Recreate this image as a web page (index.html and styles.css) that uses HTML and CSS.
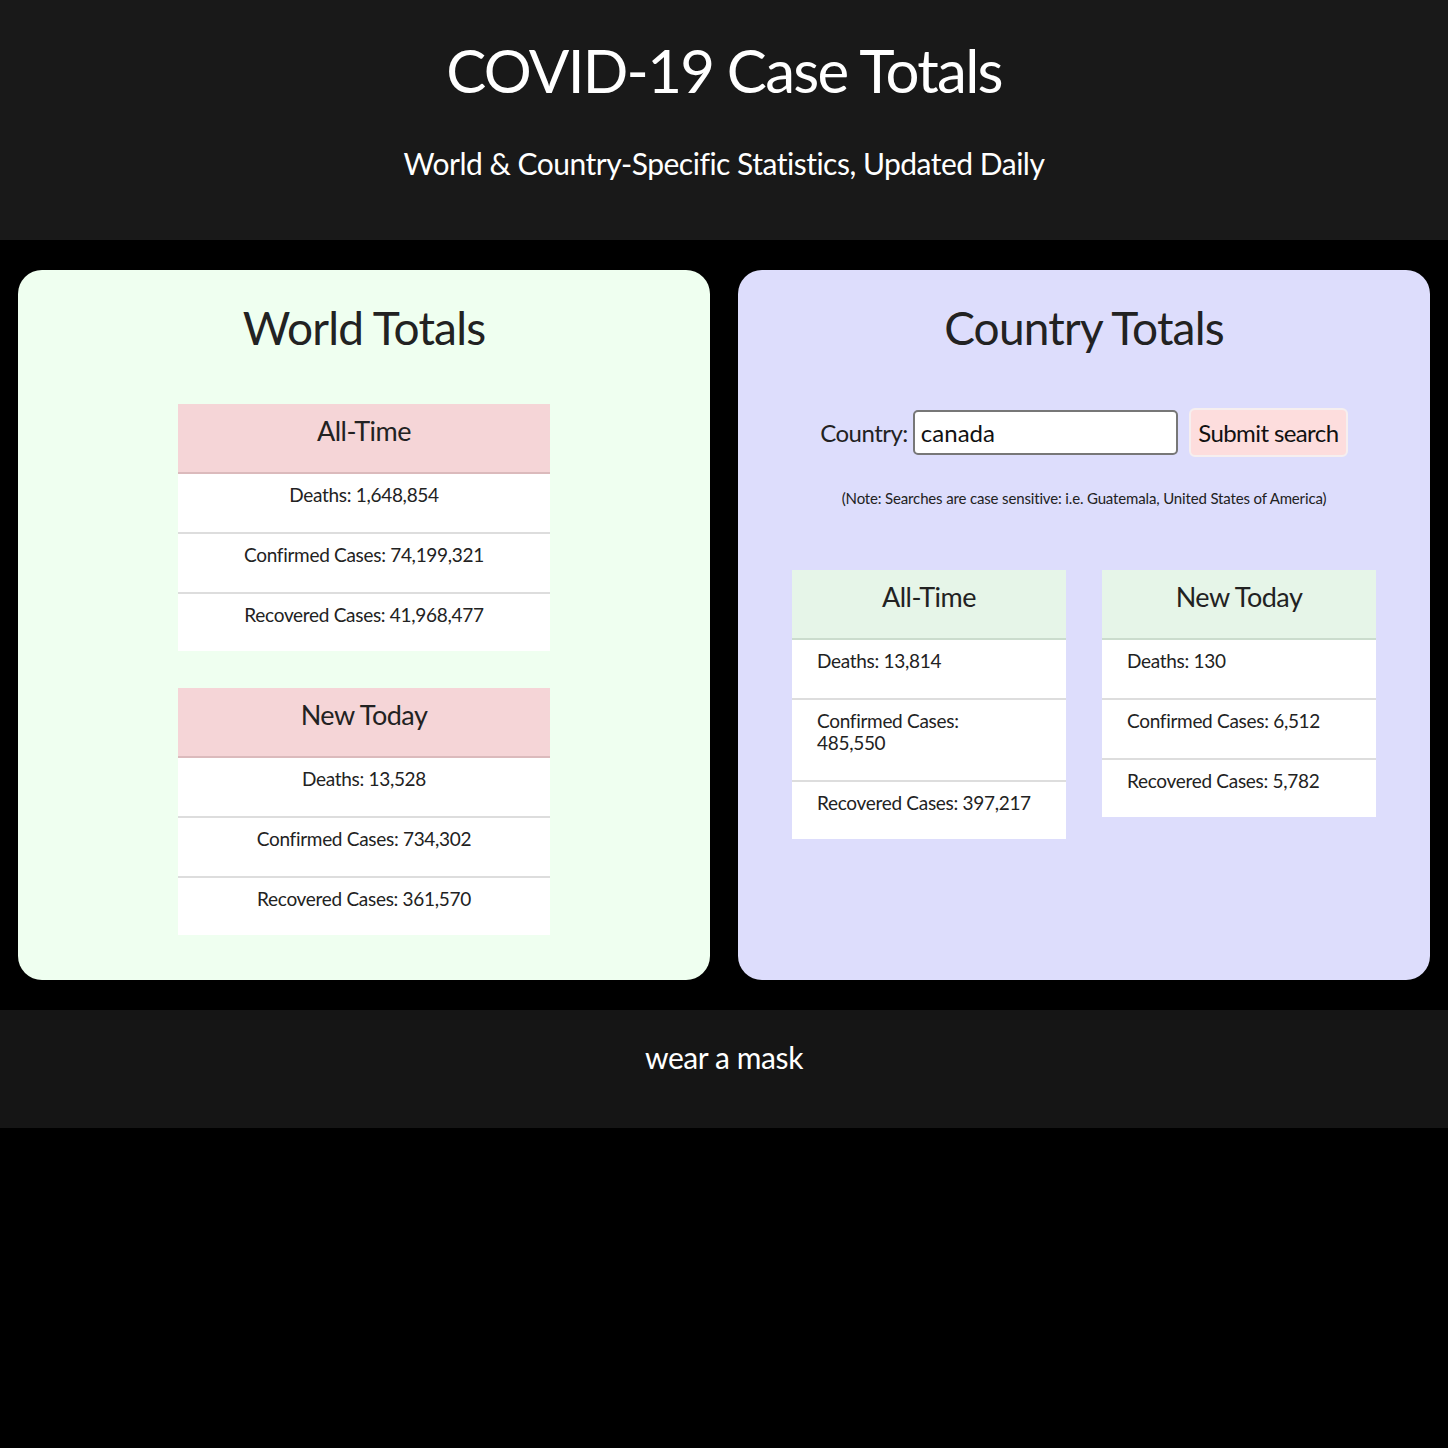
FILE: index.html
```html
<!DOCTYPE html>
<html lang="en">
<head>
<meta charset="utf-8">
<title>COVID-19 Case Totals</title>
<link rel="stylesheet" href="styles.css">
</head>
<body>
<header class="site-header">
  <h1 class="site-title">COVID-19 Case Totals</h1>
  <p class="site-subtitle">World &amp; Country-Specific Statistics, Updated Daily</p>
</header>

<main class="cards">
  <section class="card card-world">
    <h2 class="card-title">World Totals</h2>
    <div class="stack">
      <div class="stat-table">
        <div class="stat-head pink">All-Time</div>
        <div class="stat-row">Deaths: 1,648,854</div>
        <div class="stat-row">Confirmed Cases: 74,199,321</div>
        <div class="stat-row">Recovered Cases: 41,968,477</div>
      </div>
      <div class="stat-table">
        <div class="stat-head pink">New Today</div>
        <div class="stat-row">Deaths: 13,528</div>
        <div class="stat-row">Confirmed Cases: 734,302</div>
        <div class="stat-row">Recovered Cases: 361,570</div>
      </div>
    </div>
  </section>

  <section class="card card-country">
    <h2 class="card-title">Country Totals</h2>
    <form class="search">
      <label class="search-label" for="country">Country:</label>
      <input class="search-input" id="country" type="text" value="canada">
      <button class="search-btn" type="button">Submit search</button>
    </form>
    <p class="note">(Note: Searches are case sensitive: i.e. Guatemala, United States of America)</p>
    <div class="pair">
      <div class="stat-table narrow">
        <div class="stat-head green">All-Time</div>
        <div class="stat-row left">Deaths: 13,814</div>
        <div class="stat-row left">Confirmed Cases:<br>485,550</div>
        <div class="stat-row left">Recovered Cases: 397,217</div>
      </div>
      <div class="stat-table narrow">
        <div class="stat-head green">New Today</div>
        <div class="stat-row left">Deaths: 130</div>
        <div class="stat-row left">Confirmed Cases: 6,512</div>
        <div class="stat-row left">Recovered Cases: 5,782</div>
      </div>
    </div>
  </section>
</main>

<footer class="site-footer">
  <p class="footer-text">wear a mask</p>
</footer>
</body>
</html>
```

FILE: styles.css
```css
* { box-sizing: border-box; }

body {
  margin: 0;
  background: #000;
  font-family: Lato, "Open Sans", sans-serif;
  color: #222;
}

.site-header {
  background: #191919;
  color: #fff;
  text-align: center;
  padding: 32px 0 57px;
}

.site-title {
  margin: 0;
  font-size: 60px;
  line-height: 76px;
  font-weight: 400;
  letter-spacing: -1.75px;
}

.site-subtitle {
  margin: 35px 0 0;
  font-size: 30px;
  line-height: 40px;
  letter-spacing: -0.5px;
}

.cards {
  display: grid;
  grid-template-columns: 1fr 1fr;
  gap: 28px;
  padding: 30px 18px;
}

.card {
  border-radius: 24px;
  padding: 30px 0 45px;
}

.card-world { background: #effff0; }
.card-country { background: #ddddfc; }

.card-title {
  margin: 0;
  text-align: center;
  font-size: 46px;
  line-height: 56px;
  font-weight: 400;
  letter-spacing: -0.8px;
}

.stack {
  margin: 48px auto 0;
  width: 372px;
  display: flex;
  flex-direction: column;
  gap: 37px;
}

.stat-table {
  background: #fff;
}

.stat-head {
  height: 70px;
  padding-top: 10px;
  text-align: center;
  font-size: 27px;
  line-height: 34px;
  letter-spacing: -0.5px;
}

.stat-head.pink {
  background: #f5d5d7;
  border-bottom: 2px solid #dbbabc;
}

.stat-head.green {
  background: #e6f5e8;
  border-bottom: 2px solid #cbdccd;
}

.stat-row {
  padding: 10px 16px 26px;
  font-size: 19px;
  line-height: 22px;
  letter-spacing: -0.3px;
  text-align: center;
  border-bottom: 2px solid #dddddd;
}

.stat-row:last-child { border-bottom: none; padding-bottom: 25px; }

.stat-row.left {
  text-align: left;
  padding-left: 25px;
}

.search {
  margin: 52px 0 0;
  display: flex;
  justify-content: center;
  align-items: center;
}

.search-label {
  font-size: 24px;
  line-height: 30px;
  letter-spacing: -0.5px;
  margin-right: 5px;
}

.search-input {
  width: 265px;
  height: 45px;
  border: 2px solid #777;
  border-radius: 5px;
  background: #fff;
  padding: 0 6px;
  font-family: inherit;
  font-size: 24px;
  color: #111;
}

.search-btn {
  margin-left: 11px;
  width: 159px;
  height: 49px;
  background: #fddddd;
  border: 2px solid #f6efef;
  border-radius: 6px;
  font-family: inherit;
  font-size: 24px;
  letter-spacing: -0.6px;
  white-space: nowrap;
  color: #111;
  padding: 0;
}

.note {
  margin: 32px 0 0;
  text-align: center;
  font-size: 15px;
  line-height: 18px;
  letter-spacing: -0.15px;
}

.pair {
  margin-top: 63px;
  padding: 0 54px;
  display: flex;
  align-items: flex-start;
  gap: 36px;
}

.narrow { flex: 1; }

.site-footer {
  background: #151515;
  color: #fff;
  text-align: center;
  padding: 28px 0 52px;
}

.footer-text {
  margin: 0;
  font-size: 30px;
  line-height: 38px;
  letter-spacing: -0.4px;
}
```
